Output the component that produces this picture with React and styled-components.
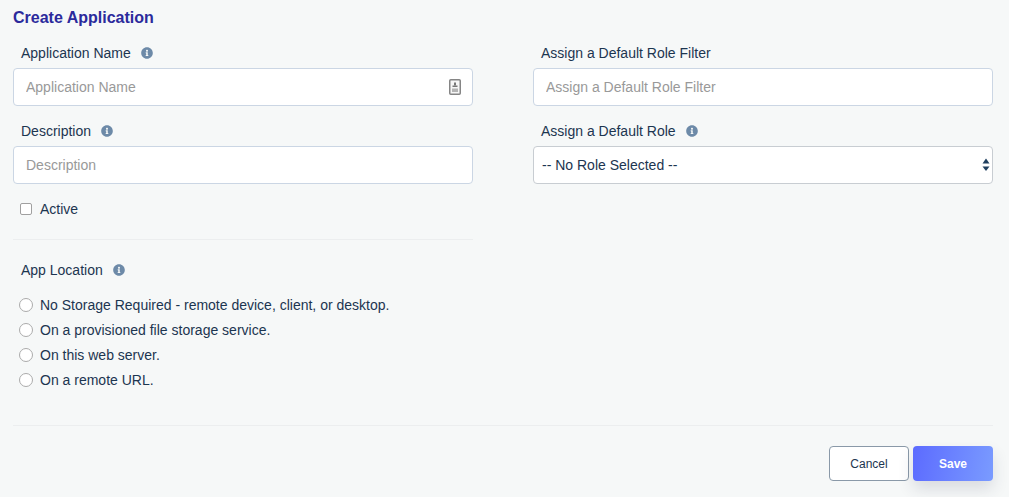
import React from 'react'
import styled, { createGlobalStyle } from 'styled-components'
import { FaInfoCircle } from 'react-icons/fa'

const GlobalStyle = createGlobalStyle`
  html, body {
    margin: 0;
    padding: 0;
    background: #f6f8f8;
    font-family: "Liberation Sans", Arial, sans-serif;
    color: #1c3550;
  }
  * { box-sizing: border-box; }
`

const locations = [
  'No Storage Required - remote device, client, or desktop.',
  'On a provisioned file storage service.',
  'On this web server.',
  'On a remote URL.',
]

function Field({ label, info, children }) {
  return (
    <FieldBox>
      <Label>
        {label}
        {info && <InfoIcon />}
      </Label>
      {children}
    </FieldBox>
  )
}

function CardIcon() {
  return (
    <CardSvg viewBox="0 0 12 16" width="12" height="16">
      <rect x="0.75" y="0.75" width="10.5" height="14.5" rx="1" fill="#f6f6f6" stroke="#858585" strokeWidth="1.5" />
      <rect x="5" y="3.5" width="2" height="3" fill="#777" />
      <rect x="3.5" y="6.5" width="5" height="1.5" fill="#777" />
      <rect x="3" y="9.5" width="6" height="3.5" fill="#b4b4b4" />
    </CardSvg>
  )
}

export default function App() {
  return (
    <Page>
      <GlobalStyle />
      <Title>Create Application</Title>
      <Columns>
        <Column>
          <Field label="Application Name" info>
            <InputWrap>
              <TextInput placeholder="Application Name" />
              <CardIcon />
            </InputWrap>
          </Field>
          <Field label="Description" info>
            <TextInput placeholder="Description" />
          </Field>
          <CheckRow>
            <Checkbox type="checkbox" />
            Active
          </CheckRow>
          <Divider />
          <LocationLabel>
            App Location
            <InfoIcon />
          </LocationLabel>
          <RadioList>
            {locations.map((item) => (
              <RadioRow key={item}>
                <Radio type="radio" name="location" />
                {item}
              </RadioRow>
            ))}
          </RadioList>
        </Column>
        <Column>
          <Field label="Assign a Default Role Filter">
            <TextInput placeholder="Assign a Default Role Filter" />
          </Field>
          <Field label="Assign a Default Role" info>
            <InputWrap>
              <Select defaultValue="">
                <option value="">-- No Role Selected --</option>
              </Select>
              <SelectArrows viewBox="0 0 8 16" width="8" height="16">
                <path d="M4 1.5 L7.5 6.5 H0.5 Z" fill="#1f3f5f" />
                <path d="M4 14 L7.5 9.5 H0.5 Z" fill="#1f3f5f" />
              </SelectArrows>
            </InputWrap>
          </Field>
        </Column>
      </Columns>
      <Footer>
        <CancelButton>Cancel</CancelButton>
        <SaveButton>Save</SaveButton>
      </Footer>
    </Page>
  )
}

const Page = styled.div`
  width: 1009px;
  height: 497px;
  padding: 8px 16px 0 13px;
  overflow: hidden;
  background: #f6f8f8;
`

const Title = styled.h1`
  margin: 0;
  font-size: 16px;
  line-height: 20px;
  font-weight: 700;
  color: #2b2a9c;
`

const Columns = styled.div`
  display: grid;
  grid-template-columns: 460px 460px;
  column-gap: 60px;
  height: 398px;
  border-bottom: 1px solid #eceeef;
`

const Column = styled.div`
  display: flex;
  flex-direction: column;
`

const FieldBox = styled.div`
  display: flex;
  flex-direction: column;
`

const Label = styled.div`
  display: flex;
  align-items: center;
  height: 40px;
  padding: 14px 0 4px 8px;
  font-size: 14px;
  color: #1c3550;
`

const InfoIcon = styled(FaInfoCircle)`
  width: 12px;
  height: 12px;
  margin-left: 10px;
  color: #6d8aa8;
`

const InputWrap = styled.div`
  position: relative;
`

const TextInput = styled.input`
  display: block;
  width: 100%;
  height: 38px;
  padding: 0 12px;
  background: #fff;
  border: 1px solid #cbd6e4;
  border-radius: 4px;
  font-family: inherit;
  font-size: 14px;
  color: #1c3550;
  outline: none;

  &::placeholder {
    color: #999;
    opacity: 1;
  }
`

const CardSvg = styled.svg`
  position: absolute;
  top: 11px;
  right: 12px;
`

const Select = styled.select`
  display: block;
  width: 100%;
  height: 38px;
  padding: 0 8px;
  background: #fff;
  border: 1px solid #c8cdd2;
  border-radius: 4px;
  font-family: inherit;
  font-size: 14px;
  color: #1c3550;
  appearance: none;
  outline: none;
`

const SelectArrows = styled.svg`
  position: absolute;
  top: 11px;
  right: 3px;
`

const CheckRow = styled.label`
  display: flex;
  align-items: center;
  height: 20px;
  margin-top: 15px;
  padding-left: 7px;
  font-size: 14px;
  color: #1c3550;
`

const Checkbox = styled.input`
  appearance: none;
  width: 12px;
  height: 12px;
  margin: 0 8px 0 0;
  background: #fff;
  border: 1px solid #a0a0a0;
  border-radius: 2px;
`

const Divider = styled.div`
  height: 1px;
  margin-top: 20px;
  background: #eceeef;
`

const LocationLabel = styled.div`
  display: flex;
  align-items: center;
  height: 20px;
  margin-top: 20px;
  padding-left: 8px;
  font-size: 14px;
  color: #1c3550;
`

const RadioList = styled.div`
  display: flex;
  flex-direction: column;
  margin-top: 12px;
`

const RadioRow = styled.label`
  display: flex;
  align-items: center;
  height: 25px;
  padding-left: 6px;
  font-size: 14px;
  color: #1c3550;
`

const Radio = styled.input`
  appearance: none;
  width: 14px;
  height: 14px;
  margin: 0 7px 0 0;
  background: #fff;
  border: 1px solid #ababab;
  border-radius: 50%;
`

const Footer = styled.div`
  display: flex;
  justify-content: flex-end;
  gap: 4px;
  margin-top: 20px;
`

const CancelButton = styled.button`
  width: 80px;
  height: 35px;
  background: #fff;
  border: 1px solid #8a99a8;
  border-radius: 4px;
  font-family: inherit;
  font-size: 12px;
  color: #1c3550;
`

const SaveButton = styled.button`
  width: 80px;
  height: 35px;
  background: linear-gradient(100deg, #5c6bff, #7a9bff);
  border: none;
  border-radius: 4px;
  box-shadow: 0 8px 16px rgba(40, 50, 80, 0.14);
  font-family: inherit;
  font-size: 12px;
  font-weight: 700;
  color: #fff;
`
